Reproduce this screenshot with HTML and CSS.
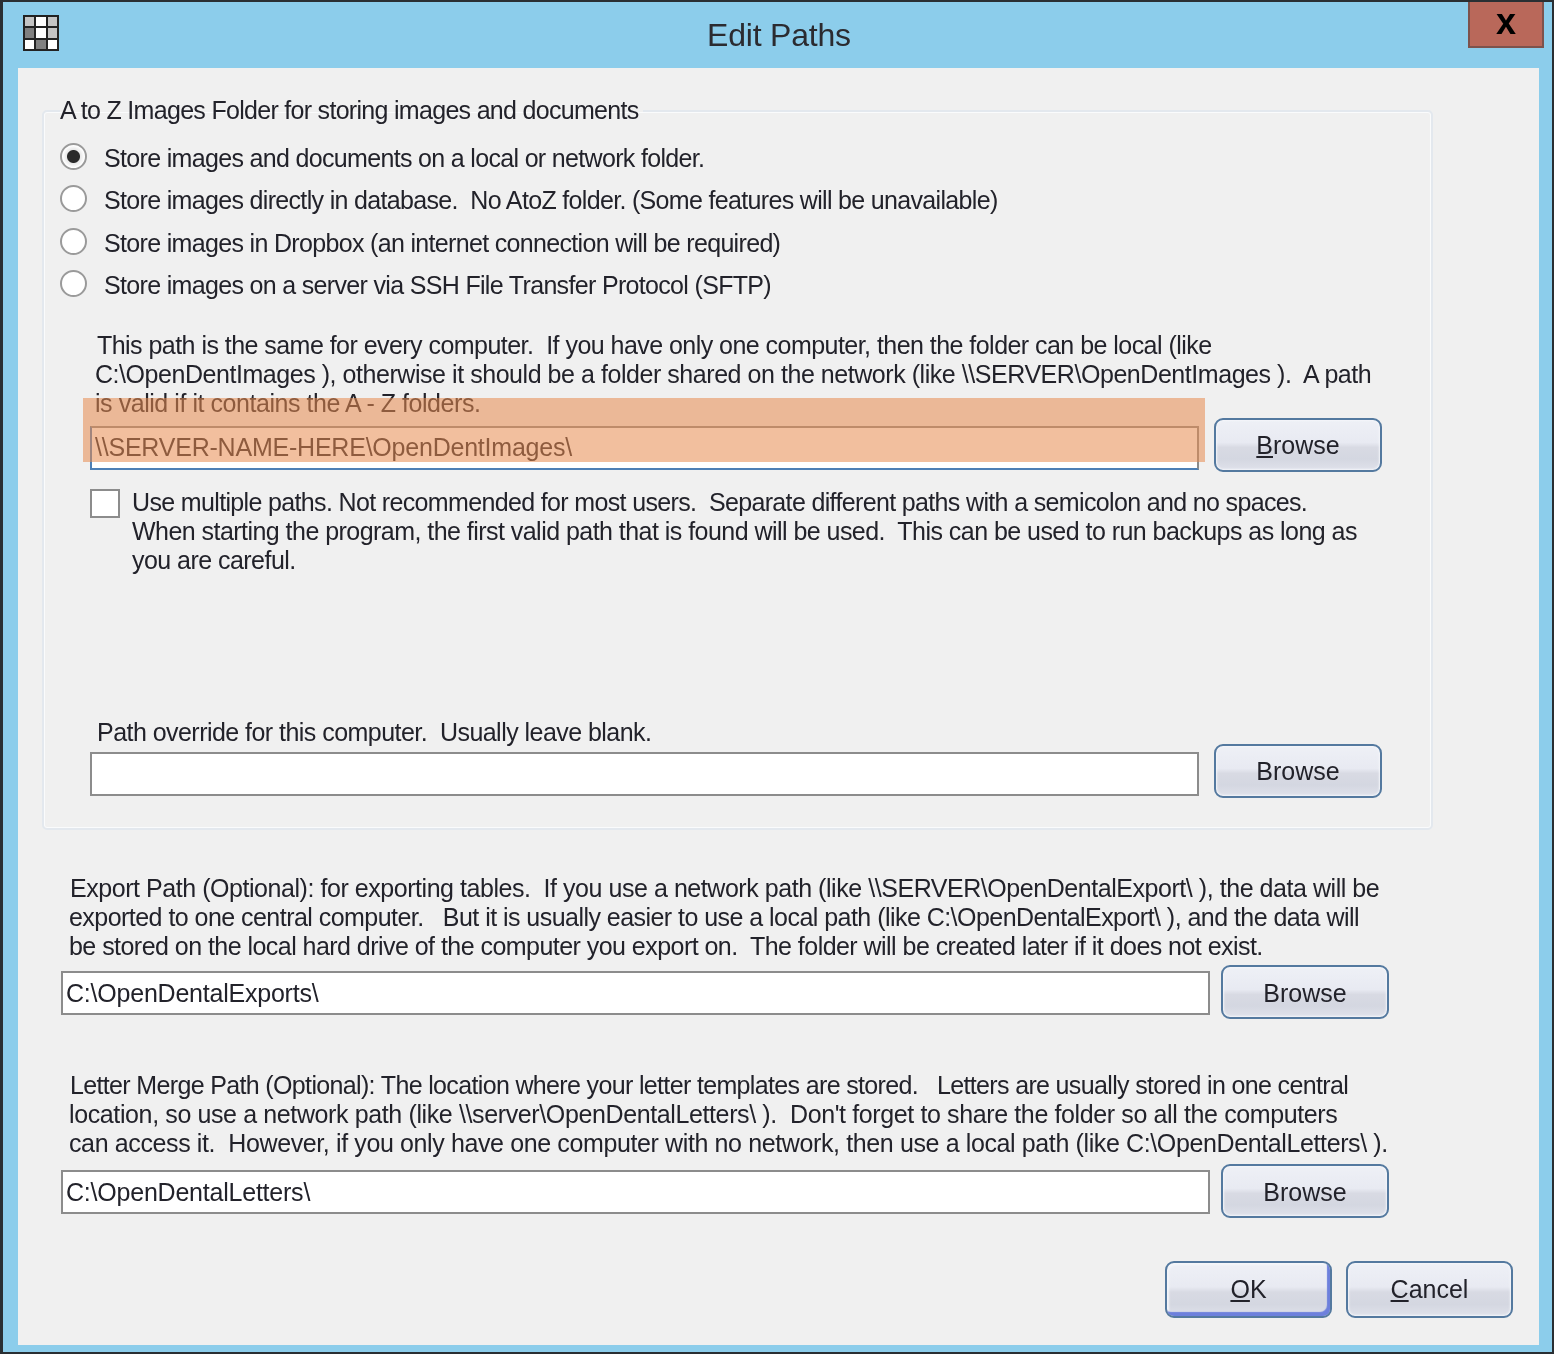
FILE: index.html
```html
<!DOCTYPE html>
<html lang="en">
<head>
    <meta charset="UTF-8">
    <title>Edit Paths</title>
    <link rel="stylesheet" href="styles.css">
</head>
<body>
    <div class="window">
        <div class="titlebar">
            <div class="app-icon">
                <i class="mid"></i><i></i><i class="mid"></i>
                <i class="dark"></i><i></i><i class="mid"></i>
                <i></i><i class="dark"></i><i></i>
            </div>
            <div class="title">Edit Paths</div>
            <button class="close">x</button>
        </div>

        <div class="panel">
            <fieldset class="group">
                <legend>A to Z Images Folder for storing images and documents</legend>

                <label class="radio"><input type="radio" name="store" checked>Store images and documents on a local or network folder.</label>
                <label class="radio"><input type="radio" name="store">Store images directly in database.&nbsp; No AtoZ folder. (Some features will be unavailable)</label>
                <label class="radio"><input type="radio" name="store">Store images in Dropbox (an internet connection will be required)</label>
                <label class="radio"><input type="radio" name="store">Store images on a server via SSH File Transfer Protocol (SFTP)</label>

                <p class="text path-help">This path is the same for every computer.&nbsp; If you have only one computer, then the folder can be local (like<br><span class="loose">C:\OpenDentImages ), otherwise it should be a folder shared on the network (like \\SERVER\OpenDentImages ).&nbsp; A path</span><br><span class="loose">is valid if it contains the A - Z folders.</span></p>

                <div class="path-row first-row">
                    <input class="path" type="text" value="\\SERVER-NAME-HERE\OpenDentImages\" id="imagesPath">
                    <button class="button browse"><u>B</u>rowse</button>
                    <div class="highlight"></div>
                </div>

                <div class="multi">
                    <input type="checkbox">
                    <p class="text"><span class="tight">Use multiple paths. Not recommended for most users.&nbsp; Separate different paths with a semicolon and no spaces.</span><br>When starting the program, the first valid path that is found will be used.&nbsp; This can be used to run backups as long as<br>you are careful.</p>
                </div>

                <p class="text override-label">Path override for this computer.&nbsp; Usually leave blank.</p>
                <div class="path-row override-row">
                    <input class="path" type="text">
                    <button class="button browse">Browse</button>
                </div>
            </fieldset>

            <p class="text outer-text export-text"><span class="loose">Export Path (Optional): for exporting tables.&nbsp; If you use a network path (like \\SERVER\OpenDentalExport\ ), the data will be</span><br>exported to one central computer.&nbsp;&nbsp; But it is usually easier to use a local path (like C:\OpenDentalExport\ ), and the data will<br>be stored on the local hard drive of the computer you export on.&nbsp; The folder will be created later if it does not exist.</p>
            <div class="path-row outer-row export-row">
                <input class="path" type="text" value="C:\OpenDentalExports\">
                <button class="button browse">Browse</button>
            </div>

            <p class="text outer-text letter-text"><span class="tight">Letter Merge Path (Optional): The location where your letter templates are stored.&nbsp;&nbsp; Letters are usually stored in one central</span><br><span class="looser">location, so use a network path (like \\server\OpenDentalLetters\ ).&nbsp; Don't forget to share the folder so all the computers</span><br><span class="looser">can access it.&nbsp; However, if you only have one computer with no network, then use a local path (like C:\OpenDentalLetters\ ).</span></p>
            <div class="path-row outer-row letter-row">
                <input class="path" type="text" value="C:\OpenDentalLetters\">
                <button class="button browse">Browse</button>
            </div>

            <div class="footer">
                <button class="button default"><u>O</u>K</button>
                <button class="button"><u>C</u>ancel</button>
            </div>
        </div>
    </div>
</body>
</html>
```

FILE: styles.css
```css
* {
    box-sizing: border-box;
}
body {
    margin: 0;
    background: white;
    font-family: "Liberation Sans", Arial, sans-serif;
    font-size: 25px;
    color: #22222a;
}
.window {
    width: 1554px;
    height: 1354px;
    background: #8ccdeb;
    border: 2px solid #2a2f33;
    border-left-width: 3px;
    display: flex;
    flex-direction: column;
    filter: blur(0.5px);
}
.titlebar {
    height: 66px;
    flex: none;
    display: grid;
    grid-template-columns: 1fr auto 1fr;
    align-items: start;
}
.app-icon {
    width: 36px;
    height: 36px;
    margin: 13px 0 0 20px;
    padding: 2px;
    background: #222;
    display: grid;
    grid-template-columns: repeat(3, 1fr);
    gap: 2px;
}
.app-icon i {
    background: white;
}
.app-icon .mid {
    background: #c4c4c4;
}
.app-icon .dark {
    background: #808080;
}
.title {
    margin-top: 13px;
    margin-left: 3px;
    font-size: 32px;
    line-height: 40px;
    letter-spacing: -0.2px;
    color: #2b2b30;
}
.close {
    justify-self: end;
    width: 76px;
    height: 46px;
    margin-right: 8px;
    padding: 0 0 4px;
    background: #b9685a;
    border: 2px solid #7d524c;
    border-top: none;
    font-family: inherit;
    font-size: 36px;
    font-weight: bold;
    line-height: 30px;
    color: black;
}
.panel {
    flex: 1;
    margin: 0 13px 7px 15px;
    padding: 0 0 0 24px;
    background: #f0f0f0;
}
.group {
    position: relative;
    width: 1391px;
    height: 734px;
    margin: 28px 0 0;
    padding: 11px 0 0 46px;
    border: 2px solid #e3e8ee;
    border-radius: 5px;
    box-shadow: inset 0 0 0 1px #fafbfc;
}
.group legend {
    margin-left: -30px;
    padding: 0 5px 0 0;
    line-height: 29px;
    letter-spacing: -0.7px;
}
.radio {
    display: flex;
    align-items: center;
    height: 42.5px;
    margin-left: -30px;
    padding-top: 2px;
    letter-spacing: -0.67px;
    white-space: nowrap;
}
.radio input {
    appearance: none;
    width: 27px;
    height: 27px;
    margin: 0 17px 4px 0;
    background: white;
    border: 2px solid #9a9a9a;
    border-radius: 50%;
}
.radio input:checked {
    background: radial-gradient(circle, #2a2a2a 0 6px, #e8e8e8 7px, white 11px);
}
.text {
    margin: 0;
    line-height: 29px;
    letter-spacing: -0.54px;
    white-space: nowrap;
}
.tight {
    letter-spacing: -0.65px;
}
.loose {
    letter-spacing: -0.45px;
}
.looser {
    letter-spacing: -0.38px;
}
.path-help {
    margin-top: 25px;
    margin-left: 5px;
    text-indent: 2px;
}
.path-row {
    position: relative;
    display: flex;
    align-items: flex-start;
    gap: 15px;
}
.first-row {
    margin-top: -0.5px;
}
.path {
    width: 1109px;
    height: 44px;
    margin-top: 8px;
    padding: 0 3px;
    background: white;
    border: 2px solid #8c8c8c;
    border-radius: 0;
    font-family: inherit;
    font-size: 25px;
    letter-spacing: -0.22px;
    color: #22222a;
}
#imagesPath {
    border-color: #8c8c8c #8c8c8c #4d7fb5 #4d7fb5;
}
.button {
    width: 168px;
    height: 54px;
    padding: 0;
    background: linear-gradient(#eef0f6, #e8eaf2 45%, #d8dae3 55%, #d4d7e1 78%, #dfe1ea);
    border: 2px solid #54799f;
    border-radius: 9px;
    box-shadow: inset 0 0 2px 1px #f4f6fa;
    font-family: inherit;
    font-size: 25px;
    color: #22222a;
}
.browse {
    padding-top: 2px;
}
.default {
    box-shadow: inset -3px -4px 1px #6d80dc, inset 2px 2px 2px #f4f6fa;
}
.highlight {
    position: absolute;
    left: -7px;
    top: -20px;
    width: 1122px;
    height: 64px;
    background: rgba(232, 138, 78, 0.55);
}
.multi {
    display: flex;
    margin-top: 16px;
}
.multi input {
    appearance: none;
    width: 30px;
    height: 29px;
    margin: 1px 12px 0 0;
    background: white;
    border: 2px solid #8c8c8c;
}
.override-label {
    margin-top: 143px;
    margin-left: 7px;
}
.override-row {
    margin-top: -3px;
}
.outer-text {
    margin-left: 27px;
    text-indent: 1px;
}
.outer-row {
    margin-left: 19px;
    gap: 11px;
}
.outer-row .path {
    width: 1149px;
    margin-top: 6px;
}
.export-text {
    margin-top: 44px;
}
.export-row {
    margin-top: 4px;
}
.letter-text {
    margin-top: 52px;
}
.letter-row {
    margin-top: 6px;
}
.footer {
    display: flex;
    justify-content: flex-end;
    gap: 14px;
    margin-top: 43px;
    margin-right: 26px;
}
.footer .button {
    width: 167px;
    height: 57px;
}
```
